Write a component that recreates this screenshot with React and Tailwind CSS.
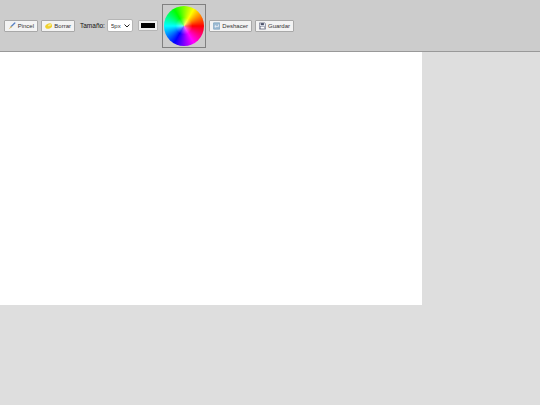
import { useState } from 'react'

const btn = 'flex items-center gap-[2px] h-[12px] px-[3px] bg-[#f3f3f3] border border-[#a8a8a8] rounded-[1px] text-[6px] leading-none text-[#333]'

const BrushIcon = () => (
  <svg width="8" height="8" viewBox="0 0 9 9">
    <path d="M8 1 L3.8 5.2" stroke="#5a82c4" strokeWidth="1.6" strokeLinecap="round" />
    <path d="M3.8 4.4 L0.8 8.2 L4.8 5.8 Z" fill="#d8b04a" />
  </svg>
)

const EraserIcon = () => (
  <svg width="8" height="8" viewBox="0 0 9 9">
    <ellipse cx="4.5" cy="4.6" rx="4.4" ry="3.1" fill="#efd02e" transform="rotate(-20 4.5 4.6)" />
    <ellipse cx="5.8" cy="3.4" rx="2.4" ry="1.2" fill="#f8e88a" transform="rotate(-20 5.8 3.4)" />
  </svg>
)

const UndoIcon = () => (
  <svg width="8" height="8" viewBox="0 0 9 9">
    <rect x="0.5" y="0.5" width="8" height="8" rx="0.5" fill="#9dbbd3" stroke="#6f9aba" strokeWidth="0.7" />
    <path d="M6.8 2.6 V5 H2.4 M3.8 3.6 L2.2 5 L3.8 6.4" fill="none" stroke="#f2f6fa" strokeWidth="0.9" />
  </svg>
)

const SaveIcon = () => (
  <svg width="8" height="8" viewBox="0 0 9 9">
    <path d="M0.5 0.5 H7.4 L8.5 1.6 V8.5 H0.5 Z" fill="#e6eaf2" stroke="#4a5068" strokeWidth="0.7" />
    <rect x="2.3" y="0.8" width="4" height="2.6" fill="#4a5068" />
    <rect x="2" y="5" width="5" height="3.2" fill="#fff" stroke="#4a5068" strokeWidth="0.5" />
  </svg>
)

export default function App() {
  const [size, setSize] = useState('5')

  return (
    <div className="w-[540px] h-[405px] flex flex-col bg-[#dedede] font-['Liberation_Sans',Arial,sans-serif] overflow-hidden">
      {/* Toolbar */}
      <div className="h-[52px] shrink-0 flex items-center pl-[4px] bg-[#cccccc] border-b border-[#999999]">
        <button className={`${btn} w-[34px]`}><BrushIcon />Pincel</button>
        <button className={`${btn} w-[34px] ml-[3px]`}><EraserIcon />Borrar</button>
        <span className="ml-[5px] w-[25px] pt-[1px] text-[6.5px] leading-none text-[#111] whitespace-nowrap">Tamaño:</span>
        <div className="relative ml-[2px] w-[26px] h-[13px]">
          <select
            value={size}
            onChange={(e) => setSize(e.target.value)}
            className="block appearance-none w-full h-full pl-[3px] leading-none bg-white border border-[#b5b5b5] rounded-[2px] text-[6px] text-[#333]"
          >
            <option value="5">5px</option>
            <option value="10">10px</option>
            <option value="20">20px</option>
          </select>
          <svg width="6" height="4" viewBox="0 0 6 4" className="absolute right-[3px] top-[5px] pointer-events-none">
            <path d="M0.5 0.5 L3 3 L5.5 0.5" fill="none" stroke="#222" strokeWidth="1" />
          </svg>
        </div>
        <div className="ml-[5px] w-[20px] h-[11px] p-[2px] bg-[#f0f0f0] border border-[#b5b5b5] rounded-[1px]">
          <div className="w-full h-full bg-black" />
        </div>
        <div className="ml-[4px] w-[44px] h-[44px] flex items-center justify-center border border-[#808080]">
          <div className="w-[40px] h-[40px] rounded-full bg-[radial-gradient(circle,rgba(255,255,255,0.5),rgba(255,255,255,0)_30%),conic-gradient(from_90deg,#ff0000,#ff00ff,#0000ff,#00ffff,#00ff00,#ffff00,#ff0000)]" />
        </div>
        <button className={`${btn} w-[43px] ml-[3px]`}><UndoIcon />Deshacer</button>
        <button className={`${btn} w-[39px] ml-[3px]`}><SaveIcon />Guardar</button>
      </div>

      {/* Canvas */}
      <div className="w-[422px] h-[253px] bg-white" />
    </div>
  )
}
